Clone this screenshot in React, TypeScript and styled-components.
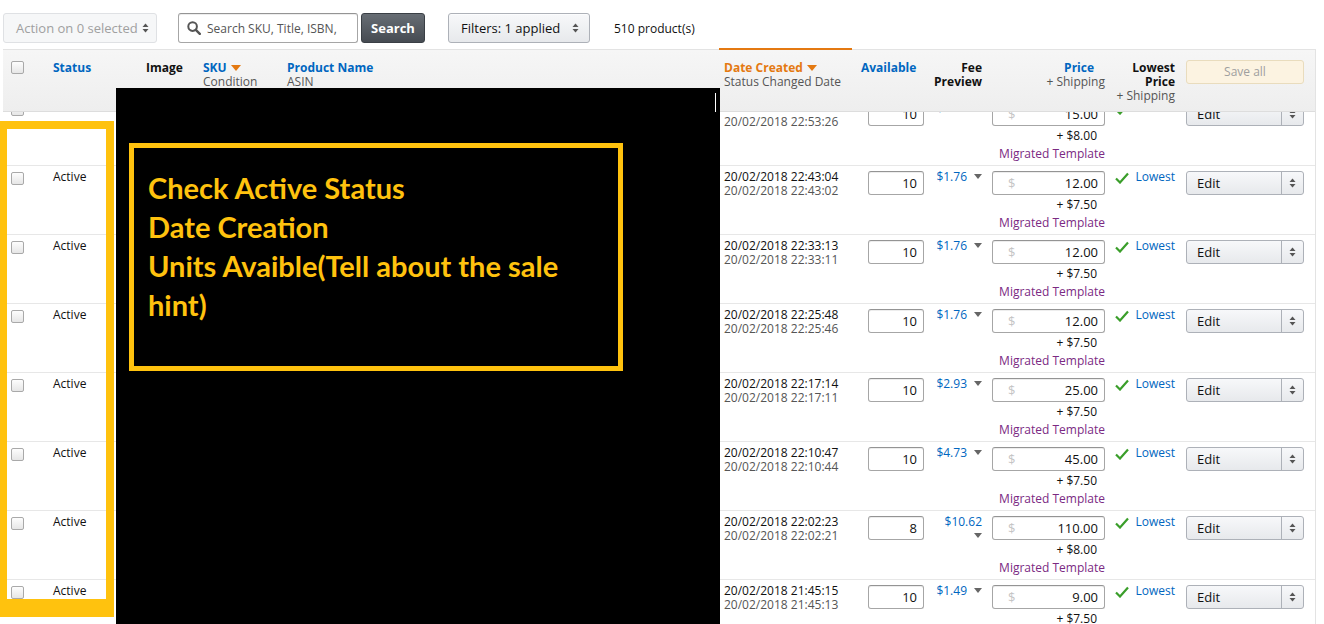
import React from "react";
import styled, { createGlobalStyle } from "styled-components";

const Global = createGlobalStyle`
  html, body { margin: 0; padding: 0; overflow: hidden; background: #fff; }
  body {
    font-family: "Open Sans", "Liberation Sans", Arial, sans-serif;
    font-size: 12px;
    color: #111;
  }
  * { box-sizing: border-box; }
`;

const COLS = "45px 93px 57px 84px 437px 137px 73px 58px 123px 70px 130px 6px";

const Page = styled.div`
  position: relative;
  width: 1324px;
  height: 624px;
  overflow: hidden;
`;

const Toolbar = styled.div`
  display: flex;
  align-items: center;
  height: 30px;
  margin: 13px 0 6px 3px;
`;

const SelectBox = styled.div<{ $w: number; $muted?: boolean; $ml?: number }>`
  display: flex;
  align-items: center;
  justify-content: space-between;
  width: ${(p) => p.$w}px;
  height: 30px;
  margin-left: ${(p) => p.$ml ?? 0}px;
  padding: 0 ${(p) => (p.$muted ? 7 : 10)}px 0 12px;
  border-radius: 3px;
  font-size: 13px;
  border: 1px solid ${(p) => (p.$muted ? "#dfe1e4" : "#adb1b8")};
  background: ${(p) =>
    p.$muted ? "#f6f7f8" : "linear-gradient(#f7f8fa, #e7e9ec)"};
  color: ${(p) => (p.$muted ? "#a0a0a0" : "#111")};
  box-shadow: ${(p) => (p.$muted ? "none" : "0 1px 0 rgba(255,255,255,.6) inset")};
`;

const SearchField = styled.div`
  display: flex;
  align-items: center;
  gap: 6px;
  width: 180px;
  height: 30px;
  margin-left: 21px;
  padding-left: 8px;
  border: 1px solid #a6a6a6;
  border-top-color: #949494;
  border-radius: 3px;
  box-shadow: 0 1px 0 rgba(255, 255, 255, 0.5), 0 1px 0 rgba(0, 0, 0, 0.07) inset;
  color: #555;
  font-size: 12px;
  white-space: nowrap;
  overflow: hidden;
`;

const SearchButton = styled.div`
  display: flex;
  align-items: center;
  justify-content: center;
  width: 64px;
  height: 30px;
  margin-left: 3px;
  border: 1px solid #3a3f45;
  border-radius: 3px;
  background: linear-gradient(#676d74, #464b52);
  color: #fff;
  font-weight: 700;
  font-size: 13px;
`;

const Count = styled.div`
  margin-left: 24px;
  font-size: 12px;
  color: #111;
`;

const Table = styled.div`
  margin-left: 3px;
  width: 1313px;
  border-right: 1px solid #e3e3e3;
`;

const HeaderRow = styled.div`
  display: grid;
  grid-template-columns: ${COLS};
  height: 63px;
  border-top: 1px solid #e3e3e3;
  border-bottom: 1px solid #dddddd;
  background: linear-gradient(#f6f6f6, #eeeeee);
  line-height: 14px;
`;

const HCell = styled.div<{ $right?: boolean; $active?: boolean }>`
  position: relative;
  padding: 11px 5px 0 5px;
  text-align: ${(p) => (p.$right ? "right" : "left")};
  &::before {
    content: "";
    display: ${(p) => (p.$active ? "block" : "none")};
    position: absolute;
    left: 0;
    top: -2px;
    width: 133px;
    height: 2px;
    background: #e47911;
  }
`;

const HLabel = styled.div<{ $tone?: "blue" | "orange" | "dark"; $pr?: number }>`
  font-weight: 700;
  padding-right: ${(p) => p.$pr ?? 0}px;
  color: ${(p) =>
    p.$tone === "blue" ? "#0066c0" : p.$tone === "orange" ? "#e47911" : "#111"};
  display: flex;
  align-items: center;
  gap: 4px;
`;

const HLabelBlock = styled.div<{ $tone?: "blue" | "dark"; $pr?: number }>`
  font-weight: 700;
  padding-right: ${(p) => p.$pr ?? 0}px;
  color: ${(p) => (p.$tone === "blue" ? "#0066c0" : "#111")};
`;

const HSub = styled.div`
  color: #555;
`;

const SaveAll = styled.div`
  margin: -1px 1px 0;
  height: 24px;
  display: flex;
  align-items: center;
  justify-content: center;
  border: 1px solid #e9dcbd;
  border-radius: 3px;
  background: #fcf3e1;
  color: #9f9f9f;
  font-size: 12px;
`;

const Body = styled.div`
  height: 512px;
  overflow: hidden;
`;

const BodyInner = styled.div`
  margin-top: -16px;
`;

const Row = styled.div`
  display: grid;
  grid-template-columns: ${COLS};
  height: 69px;
  border-top: 1px solid #e7e7e7;
  line-height: 14px;
`;

const Cell = styled.div<{ $right?: boolean; $pl?: number; $pr?: number }>`
  padding: 4px ${(p) => p.$pr ?? 5}px 0 ${(p) => p.$pl ?? 5}px;
  text-align: ${(p) => (p.$right ? "right" : "left")};
`;

const Check = styled.div<{ $mt?: number }>`
  width: 13px;
  height: 13px;
  margin: ${(p) => p.$mt ?? 2}px 0 0 3px;
  border: 1px solid #a9a9a9;
  border-radius: 2px;
  background: linear-gradient(#fdfdfd, #e6e6e6);
`;

const DateMain = styled.div`
  color: #111;
`;
const DateSub = styled.div`
  color: #555;
`;

const Qty = styled.div`
  width: 56px;
  height: 24px;
  margin: 1px 0 0 7px;
  border: 1px solid #a6a6a6;
  border-top-color: #949494;
  border-radius: 3px;
  padding: 0 6px;
  display: flex;
  align-items: center;
  justify-content: flex-end;
  font-size: 13px;
  color: #111;
  box-shadow: 0 1px 0 rgba(0, 0, 0, 0.07) inset;
`;

const Fee = styled.span`
  color: #0066c0;
`;

const Caret = styled.svg`
  margin-left: 7px;
  vertical-align: 2px;
`;

const PriceBox = styled.div`
  height: 24px;
  margin-top: 1px;
  border: 1px solid #a6a6a6;
  border-top-color: #949494;
  border-radius: 3px;
  padding: 0 6px 0 15px;
  display: flex;
  align-items: center;
  justify-content: space-between;
  font-size: 13px;
  color: #111;
  box-shadow: 0 1px 0 rgba(0, 0, 0, 0.07) inset;
`;

const Dollar = styled.span`
  color: #c4c4c4;
`;

const Ship = styled.div`
  margin-top: 1px;
  line-height: 18px;
  text-align: right;
  padding-right: 8px;
  color: #111;
  font-size: 12px;
`;

const Template = styled.div`
  line-height: 18px;
  text-align: right;
  color: #7b2a83;
  font-size: 12px;
`;

const Lowest = styled.div`
  display: flex;
  align-items: flex-start;
  justify-content: flex-end;
  gap: 6px;
  color: #0066c0;
`;

const EditBtn = styled.div`
  display: flex;
  height: 24px;
  margin: 1px 1px 0;
  border: 1px solid #adb1b8;
  border-radius: 3px;
  background: linear-gradient(#f7f8fa, #e7e9ec);
  font-size: 13px;
  color: #111;
`;

const EditLabel = styled.div`
  flex: 1;
  display: flex;
  align-items: center;
  padding-left: 10px;
  border-right: 1px solid #adb1b8;
`;

const EditArrow = styled.div`
  width: 21px;
  display: flex;
  align-items: center;
  justify-content: center;
`;

const Blackout = styled.div`
  position: absolute;
  left: 116px;
  top: 88px;
  width: 604px;
  height: 536px;
  background: #000;
  padding: 55px 0 0 13px;
`;

const Cursor = styled.div`
  position: absolute;
  left: 599px;
  top: 5px;
  width: 1px;
  height: 19px;
  background: #fff;
`;

const Callout = styled.div`
  width: 494px;
  height: 228px;
  border: 5px solid #ffc20e;
  padding: 20px 8px 0 14px;
  font-family: Lato, "Open Sans", sans-serif;
  font-weight: 700;
  font-size: 29px;
  line-height: 39px;
  color: #ffc20e;
`;

const Highlight = styled.div`
  position: absolute;
  left: 0;
  top: 121px;
  width: 114px;
  height: 496px;
  border: 8px solid #ffc20e;
  border-left-width: 7px;
  border-bottom-width: 18px;
`;

const UpDown = () => (
  <svg width="7" height="10" viewBox="0 0 7 10">
    <polygon points="0.5,4 3.5,0.5 6.5,4" fill="#555" />
    <polygon points="0.5,6 3.5,9.5 6.5,6" fill="#555" />
  </svg>
);

const SortArrow = () => (
  <svg width="10" height="6" viewBox="0 0 10 6">
    <polygon points="0,0 10,0 5,6" fill="#e47911" />
  </svg>
);

const Magnifier = () => (
  <svg width="14" height="14" viewBox="0 0 14 14">
    <circle cx="5.6" cy="5.6" r="4.3" fill="none" stroke="#555" strokeWidth="2" />
    <line x1="8.8" y1="8.8" x2="12.8" y2="12.8" stroke="#555" strokeWidth="2.4" strokeLinecap="round" />
  </svg>
);

const CheckMark = () => (
  <svg width="14" height="12" viewBox="0 0 14 12" style={{ marginTop: 2 }}>
    <polyline points="1,6.5 5,10.5 13,1.5" fill="none" stroke="#3a9e2a" strokeWidth="2.2" />
  </svg>
);

type RowData = {
  created: string;
  changed: string;
  qty: string;
  fee: string;
  price: string;
  ship: string;
};

const rows: RowData[] = [
  { created: "20/02/2018 22:53:28", changed: "20/02/2018 22:53:26", qty: "10", fee: "$1.76", price: "15.00", ship: "+ $8.00" },
  { created: "20/02/2018 22:43:04", changed: "20/02/2018 22:43:02", qty: "10", fee: "$1.76", price: "12.00", ship: "+ $7.50" },
  { created: "20/02/2018 22:33:13", changed: "20/02/2018 22:33:11", qty: "10", fee: "$1.76", price: "12.00", ship: "+ $7.50" },
  { created: "20/02/2018 22:25:48", changed: "20/02/2018 22:25:46", qty: "10", fee: "$1.76", price: "12.00", ship: "+ $7.50" },
  { created: "20/02/2018 22:17:14", changed: "20/02/2018 22:17:11", qty: "10", fee: "$2.93", price: "25.00", ship: "+ $7.50" },
  { created: "20/02/2018 22:10:47", changed: "20/02/2018 22:10:44", qty: "10", fee: "$4.73", price: "45.00", ship: "+ $7.50" },
  { created: "20/02/2018 22:02:23", changed: "20/02/2018 22:02:21", qty: "8", fee: "$10.62", price: "110.00", ship: "+ $8.00" },
  { created: "20/02/2018 21:45:15", changed: "20/02/2018 21:45:13", qty: "10", fee: "$1.49", price: "9.00", ship: "+ $7.50" },
];

export default function App() {
  return (
    <Page>
      <Global />
      <Toolbar>
        <SelectBox $w={154} $muted>
          <span>Action on 0 selected</span>
          <UpDown />
        </SelectBox>
        <SearchField>
          <Magnifier />
          <span>Search SKU, Title, ISBN,</span>
        </SearchField>
        <SearchButton>Search</SearchButton>
        <SelectBox $w={142} $ml={23}>
          <span>Filters: 1 applied</span>
          <UpDown />
        </SelectBox>
        <Count>510 product(s)</Count>
      </Toolbar>

      <Table>
        <HeaderRow>
          <HCell>
            <Check $mt={0} />
          </HCell>
          <HCell>
            <HLabel $tone="blue">Status</HLabel>
          </HCell>
          <HCell>
            <HLabel>Image</HLabel>
          </HCell>
          <HCell>
            <HLabel $tone="blue">
              SKU <SortArrow />
            </HLabel>
            <HSub>Condition</HSub>
          </HCell>
          <HCell>
            <HLabel $tone="blue">Product Name</HLabel>
            <HSub>ASIN</HSub>
          </HCell>
          <HCell $active>
            <HLabel $tone="orange">
              Date Created <SortArrow />
            </HLabel>
            <HSub>Status Changed Date</HSub>
          </HCell>
          <HCell>
            <HLabel $tone="blue">Available</HLabel>
          </HCell>
          <HCell $right>
            <HLabelBlock>
              Fee
              <br />
              Preview
            </HLabelBlock>
          </HCell>
          <HCell $right>
            <HLabelBlock $tone="blue" $pr={11}>
              Price
            </HLabelBlock>
            <HSub>+ Shipping</HSub>
          </HCell>
          <HCell $right>
            <HLabelBlock>
              Lowest
              <br />
              Price
            </HLabelBlock>
            <HSub>+ Shipping</HSub>
          </HCell>
          <HCell>
            <SaveAll>Save all</SaveAll>
          </HCell>
          <HCell />
        </HeaderRow>

        <Body>
          <BodyInner>
            {rows.map((r, i) => (
              <Row key={i}>
                <Cell>
                  <Check />
                </Cell>
                <Cell>Active</Cell>
                <Cell />
                <Cell />
                <Cell />
                <Cell>
                  <DateMain>{r.created}</DateMain>
                  <DateSub>{r.changed}</DateSub>
                </Cell>
                <Cell>
                  <Qty>{r.qty}</Qty>
                </Cell>
                <Cell $right>
                  <Fee>{r.fee}</Fee>
                  <Caret width="8" height="5" viewBox="0 0 8 5">
                    <polygon points="0,0 8,0 4,5" fill="#666" />
                  </Caret>
                </Cell>
                <Cell>
                  <PriceBox>
                    <Dollar>$</Dollar>
                    <span>{r.price}</span>
                  </PriceBox>
                  <Ship>{r.ship}</Ship>
                  <Template>Migrated Template</Template>
                </Cell>
                <Cell $right>
                  <Lowest>
                    <CheckMark />
                    <span>Lowest</span>
                  </Lowest>
                </Cell>
                <Cell>
                  <EditBtn>
                    <EditLabel>Edit</EditLabel>
                    <EditArrow>
                      <UpDown />
                    </EditArrow>
                  </EditBtn>
                </Cell>
                <Cell />
              </Row>
            ))}
          </BodyInner>
        </Body>
      </Table>

      <Highlight />
      <Blackout>
        <Cursor />
        <Callout>
          Check Active Status
          <br />
          Date Creation
          <br />
          Units Avaible(Tell about the sale hint)
        </Callout>
      </Blackout>
    </Page>
  );
}
